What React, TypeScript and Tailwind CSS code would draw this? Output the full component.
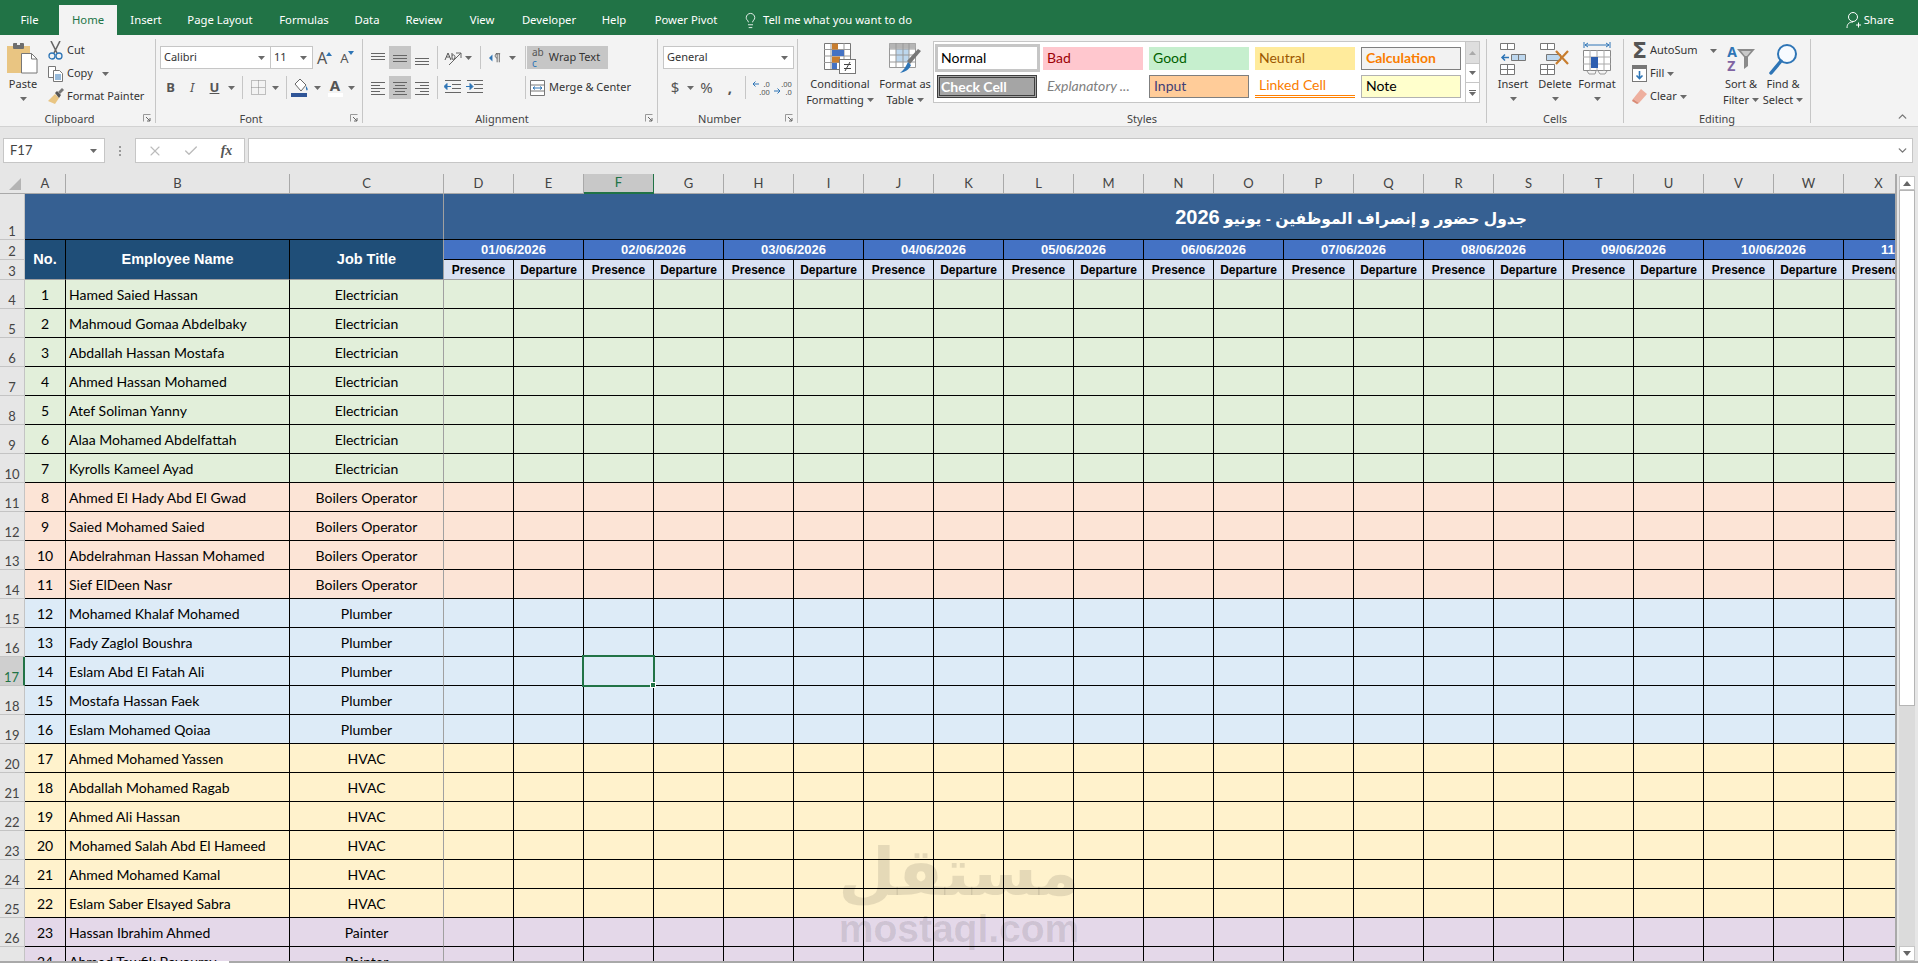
import { ReactNode } from "react";
import { Check, ChevronDown, ChevronUp, Lightbulb, X } from "lucide-react";

const tabs = [
  { label: "File", w: "w-[59px]" },
  { label: "Home", w: "w-[58px]", active: true },
  { label: "Insert", w: "w-[58px]" },
  { label: "Page Layout", w: "w-[90px]" },
  { label: "Formulas", w: "w-[78px]" },
  { label: "Data", w: "w-[48px]" },
  { label: "Review", w: "w-[66px]" },
  { label: "View", w: "w-[50px]" },
  { label: "Developer", w: "w-[84px]" },
  { label: "Help", w: "w-[46px]" },
  { label: "Power Pivot", w: "w-[98px]" },
];

const columns = "D E F G H I J K L M N O P Q R S T U V W X".split(" ");

const dates = ["01", "02", "03", "04", "05", "06", "07", "08", "09", "10", "11"].map((d) => `${d}/06/2026`);

const green = "bg-[#e2efda]";
const orange = "bg-[#fce4d6]";
const blue = "bg-[#ddebf7]";
const yellow = "bg-[#fff2cc]";
const purple = "bg-[#e4d8e9]";

const staff: [string, string, string][] = [
  ["Hamed Saied Hassan", "Electrician", green],
  ["Mahmoud Gomaa Abdelbaky", "Electrician", green],
  ["Abdallah Hassan Mostafa", "Electrician", green],
  ["Ahmed Hassan Mohamed", "Electrician", green],
  ["Atef Soliman Yanny", "Electrician", green],
  ["Alaa Mohamed Abdelfattah", "Electrician", green],
  ["Kyrolls Kameel Ayad", "Electrician", green],
  ["Ahmed El Hady Abd El Gwad", "Boilers Operator", orange],
  ["Saied Mohamed Saied", "Boilers Operator", orange],
  ["Abdelrahman Hassan Mohamed", "Boilers Operator", orange],
  ["Sief ElDeen Nasr", "Boilers Operator", orange],
  ["Mohamed Khalaf Mohamed", "Plumber", blue],
  ["Fady Zaglol Boushra", "Plumber", blue],
  ["Eslam Abd El Fatah Ali", "Plumber", blue],
  ["Mostafa Hassan Faek", "Plumber", blue],
  ["Eslam Mohamed Qoiaa", "Plumber", blue],
  ["Ahmed Mohamed Yassen", "HVAC", yellow],
  ["Abdallah Mohamed Ragab", "HVAC", yellow],
  ["Ahmed Ali Hassan", "HVAC", yellow],
  ["Mohamed Salah Abd El Hameed", "HVAC", yellow],
  ["Ahmed Mohamed Kamal", "HVAC", yellow],
  ["Eslam Saber Elsayed Sabra", "HVAC", yellow],
  ["Hassan Ibrahim Ahmed", "Painter", purple],
  ["Ahmed Tawfik Bayoumy", "Painter", purple],
];

function Caret() {
  return (
    <svg width="7" height="4" viewBox="0 0 7 4" className="shrink-0">
      <path d="M0 0h7L3.5 4z" fill="#6a6a6a" />
    </svg>
  );
}

function Slot({ className, children }: { className: string; children?: ReactNode }) {
  return <div className={`flex h-[23px] shrink-0 items-center justify-center ${className}`}>{children}</div>;
}

function Sep({ className }: { className: string }) {
  return (
    <div className={`flex h-[23px] shrink-0 justify-center ${className}`}>
      <div className="h-full w-px bg-[#c6c6c6]" />
    </div>
  );
}

function Launcher() {
  return (
    <svg width="8" height="8" viewBox="0 0 8 8" className="absolute bottom-[1px] right-[4px]">
      <path d="M0.5 7.5V0.5H7.5" fill="none" stroke="#999" />
      <path d="M3 3l4 4M7 4v3H4" fill="none" stroke="#666" />
    </svg>
  );
}

function Group({ label, className, launcher, children }: { label: string; className: string; launcher?: boolean; children: ReactNode }) {
  return (
    <div className={`relative flex h-[84px] shrink-0 flex-col border-r border-[#c6c6c6] ${className}`}>
      <div className="flex h-[75px]">{children}</div>
      <div className={launcher ? "h-[9px] pr-[16px] text-center text-[11px] leading-[9px] text-[#444]" : "h-[9px] text-center text-[11px] leading-[9px] text-[#444]"}>{label}</div>
      {launcher && <Launcher />}
    </div>
  );
}

function BigBtn({ className, icon, lines, caret }: { className: string; icon: ReactNode; lines: ReactNode[]; caret?: boolean }) {
  return (
    <div className={`flex shrink-0 flex-col items-center pt-[4px] ${className}`}>
      <div className="flex h-[31px] items-center justify-center">{icon}</div>
      <div className="mt-[2px] flex flex-col items-center text-[11px] leading-[16px] text-[#333]">
        {lines.map((line, i) => (
          <div key={i} className="flex h-[16px] items-center gap-[3px] whitespace-nowrap">
            {line}
          </div>
        ))}
      </div>
      {caret && (
        <div className="flex h-[14px] items-center">
          <Caret />
        </div>
      )}
    </div>
  );
}

function Bars({ rows }: { rows: [number, number, number][] }) {
  return (
    <svg width="16" height="16" viewBox="0 0 16 16">
      {rows.map(([x, y, w], i) => (
        <rect key={i} x={x} y={y} width={w} height="1" fill="#666" />
      ))}
    </svg>
  );
}

function PasteIcon() {
  return (
    <svg width="32" height="31" viewBox="0 0 32 31">
      <rect x="0" y="3" width="23" height="27" fill="#e9c582" />
      <rect x="6" y="0" width="11" height="6" rx="1" fill="#6e6e6e" />
      <rect x="10" y="0" width="3" height="2" fill="#eee" />
      <path d="M14.5 10.5h10l5.5 5.5v14H14.5z" fill="#fff" stroke="#777" />
      <path d="M24.5 10.5V16H30" fill="none" stroke="#777" />
    </svg>
  );
}

function ScissorsIcon() {
  return (
    <svg width="15" height="19" viewBox="0 0 15 19">
      <path d="M3 0l6 12M12 0L6 12" stroke="#666" strokeWidth="1.6" fill="none" />
      <circle cx="4" cy="15" r="3" fill="none" stroke="#2e75b6" strokeWidth="1.3" />
      <circle cx="11" cy="15" r="3" fill="none" stroke="#2e75b6" strokeWidth="1.3" />
    </svg>
  );
}

function CopyIcon() {
  return (
    <svg width="15" height="16" viewBox="0 0 15 16">
      <path d="M0.5 0.5h7v11h-7z" fill="#fff" stroke="#777" />
      <path d="M5.5 4.5h6l3 3v8h-9z" fill="#fff" stroke="#777" />
      <path d="M7 9h6M7 11h6M7 13h6" stroke="#2e75b6" />
    </svg>
  );
}

function BrushIcon() {
  return (
    <svg width="16" height="17" viewBox="0 0 16 17">
      <path d="M7 6l4 4-4 6-7-3z" fill="#e9c582" />
      <path d="M7 5l2-2 4 4-2 3z" fill="#555" />
      <path d="M10 4l4-4 2 2-4 4z" fill="#777" />
    </svg>
  );
}

function GrowA({ small }: { small?: boolean }) {
  return (
    <div className="relative flex items-end">
      <span className={small ? "text-[13px] leading-none text-[#555]" : "text-[16px] leading-none text-[#555]"}>A</span>
      <svg width="6" height="4" viewBox="0 0 6 4" className="mb-[10px] -ml-[1px]">
        <path d={small ? "M0 0h6L3 4z" : "M0 4h6L3 0z"} fill="#2e75b6" />
      </svg>
    </div>
  );
}

function BordersIcon() {
  return (
    <svg width="15" height="15" viewBox="0 0 15 15">
      <path d="M0.5 0.5h14v14H0.5zM7.5 0.5v14M0.5 7.5h14" fill="none" stroke="#888" strokeDasharray="1 1" />
    </svg>
  );
}

function FillIcon() {
  return (
    <svg width="18" height="19" viewBox="0 0 18 19">
      <path d="M4 6l5-5 6 6-5 6z" fill="#fff" stroke="#666" />
      <path d="M15 8c1.5 2 2 3 1.5 4s-2 .5-1.5-4z" fill="#2e75b6" />
      <rect x="0" y="15" width="16" height="4" fill="#2f5597" />
    </svg>
  );
}

function OrientIcon() {
  return (
    <svg width="20" height="16" viewBox="0 0 20 16">
      <path d="M6 15L18 3" stroke="#666" fill="none" />
      <path d="M13 3h5v5" stroke="#666" fill="none" />
      <path d="M2 10l3-7 3 7M3.500 7h3M9 3v6c2 1 3-.5 3-2s-1.500-3-3-1.500" stroke="#555" fill="none" />
    </svg>
  );
}

function RtlIcon() {
  return (
    <svg width="14" height="12" viewBox="0 0 14 12">
      <path d="M0 6l4-4v8z" fill="#2e75b6" />
      <path d="M8 1h5M9.5 1v10M12 1v10M9.5 1C6.5 1 6.5 6 9.5 6" stroke="#555" fill="none" />
    </svg>
  );
}

function IndentIcon({ flip }: { flip?: boolean }) {
  return (
    <svg width="17" height="15" viewBox="0 0 17 15">
      <path d="M1 0.5h16M8 4.5h9M8 8.5h9M1 12.5h16" stroke="#666" />
      <path d={flip ? "M0 6.5h4M4 3.5l3 3-3 3z" : "M7 6.5H3M3 3.5l-3 3 3 3z"} stroke="#2e75b6" fill="#2e75b6" />
    </svg>
  );
}

function MergeIcon() {
  return (
    <svg width="15" height="16" viewBox="0 0 15 16">
      <path d="M0.5 0.5h14v15H0.5zM0.5 5h14M0.5 11h14" fill="#fff" stroke="#777" />
      <path d="M3 8h9M3 8l2-1.5M3 8l2 1.5M12 8l-2-1.5M12 8l-2 1.5" stroke="#2e75b6" fill="none" />
    </svg>
  );
}

function DecIcon({ more }: { more?: boolean }) {
  return (
    <div className="flex items-center text-[7.5px] leading-[8px] text-[#555]">
      {!more && (
        <svg width="7" height="8" viewBox="0 0 7 8" className="-mt-[7px]">
          <path d="M7 4H1M3.500 1.500L1 4l2.500 2.500" stroke="#2e75b6" fill="none" />
        </svg>
      )}
      {more && (
        <svg width="7" height="8" viewBox="0 0 7 8" className="mt-[7px]">
          <path d="M0 4h6M3.500 1.500L6 4 3.500 6.500" stroke="#2e75b6" fill="none" />
        </svg>
      )}
      <div className="flex flex-col items-end">
        <span>{more ? ".00" : ".0"}</span>
        <span>{more ? ".0" : ".00"}</span>
      </div>
    </div>
  );
}

function CondIcon() {
  return (
    <svg width="32" height="31" viewBox="0 0 32 31">
      <path d="M0.5 0.5h26v26H0.5z" fill="#fff" stroke="#777" />
      <path d="M7 0v26M20 0v26M0 6.5h26M0 13h26M0 19.5h26" stroke="#999" fill="none" />
      <rect x="8" y="0.5" width="6" height="6" fill="#c87d2e" />
      <rect x="8" y="7" width="12" height="6" fill="#4472c4" />
      <rect x="8" y="13.5" width="8" height="6" fill="#c87d2e" />
      <rect x="8" y="20" width="5" height="6" fill="#4472c4" />
      <rect x="15.5" y="16.5" width="16" height="14" fill="#fff" stroke="#777" />
      <path d="M20 21.5h7M20 25.5h7M26 19l-5 9" stroke="#444" fill="none" />
    </svg>
  );
}

function TableIcon() {
  return (
    <svg width="32" height="31" viewBox="0 0 32 31">
      <path d="M0.5 0.5h26v24H0.5z" fill="#fff" stroke="#999" />
      <rect x="0.5" y="0.5" width="26" height="5" fill="#b5b5b5" />
      <rect x="7" y="6" width="13" height="13" fill="#bdd7ee" />
      <path d="M7 0v25M14 0v25M20 0v25M0 6h26M0 12h26M0 19h26" stroke="#999" fill="none" />
      <path d="M18 18L29 6l3 2-11 13z" fill="#777" />
      <path d="M19 19l3 3c-2 5-6 7-11 8 4-3 6-7 8-11z" fill="#2e75b6" />
    </svg>
  );
}

function InsertIcon() {
  return (
    <svg width="27" height="32" viewBox="0 0 27 32">
      <path d="M0.5 0.5h14v6H0.5zM7.5 0.5v6" fill="#fff" stroke="#777" />
      <path d="M11.5 11.5h14v6H11.5zM18.5 11.5v6" fill="#bdd7ee" stroke="#777" />
      <path d="M9 14.5H2M5 11.5l-3 3 3 3" stroke="#2e75b6" strokeWidth="1.5" fill="none" />
      <path d="M0.5 21.5h14v10H0.5zM7.5 21.5v10M0.5 26.5h14" fill="#fff" stroke="#777" />
    </svg>
  );
}

function DeleteIcon() {
  return (
    <svg width="30" height="32" viewBox="0 0 30 32">
      <path d="M0.5 0.5h14v6H0.5zM7.5 0.5v6" fill="#fff" stroke="#777" />
      <path d="M6.5 11.5h14v6H6.5z" fill="#bdd7ee" stroke="#777" />
      <path d="M0.5 21.5h14v10H0.5zM7.5 21.5v10M0.5 26.5h14" fill="#fff" stroke="#777" />
      <path d="M16 8l12 13M28 8L16 21" stroke="#c87d2e" strokeWidth="2.2" />
    </svg>
  );
}

function FormatIcon() {
  return (
    <svg width="28" height="33" viewBox="0 0 28 33">
      <path d="M2 3h24M2 3l3-2M2 3l3 2M26 3l-3-2M26 3l-3 2M1 0v6M27 0v6" stroke="#2e75b6" fill="none" />
      <path d="M0.5 8.5h27v20H0.5z" fill="#fff" stroke="#888" />
      <path d="M7 8v21M14 8v21M21 8v21M0 15h28M0 22h28" stroke="#aaa" />
      <rect x="8" y="15" width="7" height="11" fill="#2f5fb0" />
      <path d="M4 29l2 3h6l1-3M15 29l2 3h5l2-3" stroke="#999" fill="none" />
    </svg>
  );
}

function FillDownIcon() {
  return (
    <svg width="15" height="17" viewBox="0 0 15 17">
      <rect x="0.5" y="0.5" width="14" height="16" fill="#fff" stroke="#777" />
      <rect x="0" y="0" width="15" height="4" fill="#777" />
      <path d="M7.5 6v7M4.5 10.5l3 3 3-3" stroke="#2e75b6" strokeWidth="1.6" fill="none" />
    </svg>
  );
}

function EraserIcon() {
  return (
    <svg width="15" height="15" viewBox="0 0 15 15">
      <path d="M9 0l6 5-8 9-6-4z" fill="#eeaf9e" />
      <path d="M1 10l6 4-2 1-5-3z" fill="#d98a75" />
    </svg>
  );
}

function FunnelIcon() {
  return (
    <svg width="18" height="20" viewBox="0 0 18 20">
      <path d="M0 0h18l-7 8v9l-4 3V8z" fill="#8a8a8a" />
      <path d="M4 2h10l-4 5H8z" fill="#c9c9c9" />
    </svg>
  );
}

function FindIcon() {
  return (
    <svg width="29" height="32" viewBox="0 0 29 32">
      <circle cx="18" cy="11" r="9" fill="#f7fbff" stroke="#2e75b6" strokeWidth="2" />
      <path d="M12 18L2 30" stroke="#2e75b6" strokeWidth="3.5" strokeLinecap="round" />
    </svg>
  );
}

function TitleBar() {
  return (
    <div className="flex h-[35px] shrink-0 items-end bg-[#217346] text-[11.3px] text-white">
      {tabs.map((t) => (
        <div
          key={t.label}
          className={
            t.active
              ? `flex h-[30px] items-center justify-center bg-[#f3f3f3] text-[#217346] ${t.w}`
              : `flex h-[30px] items-center justify-center ${t.w}`
          }
        >
          {t.label}
        </div>
      ))}
      <div className="ml-[7px] flex h-[30px] items-center gap-[4px]">
        <Lightbulb size={17} strokeWidth={1.2} />
        <span>Tell me what you want to do</span>
      </div>
      <div className="ml-auto mr-[24px] flex h-[30px] items-center gap-[3px]">
        <svg width="15" height="18" viewBox="0 0 15 18">
          <circle cx="7" cy="6" r="4.5" fill="none" stroke="#fff" />
          <path d="M1 17c0-4 2-6 6-6M10 14h5M12.5 11.500v5" fill="none" stroke="#fff" />
        </svg>
        <span>Share</span>
      </div>
    </div>
  );
}

function Ribbon() {
  return (
    <div className="flex h-[92px] shrink-0 items-start border-b border-[#d2d2d2] bg-[#f3f3f3] pt-[4px]">
      <Group label="Clipboard" className="w-[156px]" launcher>
        <BigBtn className="w-[46px]" icon={<PasteIcon />} lines={["Paste"]} caret />
        <div className="flex flex-col pl-[2px] text-[11px] text-[#333]">
          <div className="flex h-[23px] items-center gap-[4px]">
            <ScissorsIcon />
            <span>Cut</span>
          </div>
          <div className="flex h-[23px] items-center gap-[4px]">
            <CopyIcon />
            <span>Copy</span>
            <span className="ml-[5px]">
              <Caret />
            </span>
          </div>
          <div className="flex h-[23px] items-center gap-[3px]">
            <BrushIcon />
            <span>Format Painter</span>
          </div>
        </div>
      </Group>

      <Group label="Font" className="w-[207px]" launcher>
        <div className="flex flex-col pl-[4px] pt-[7px]">
          <div className="flex h-[23px] text-[11px] text-[#333]">
            <div className="flex w-[111px] items-center justify-between border border-[#c6c6c6] bg-white pl-[3px] pr-[5px]">
              Calibri
              <Caret />
            </div>
            <div className="flex w-[42px] items-center justify-between border border-l-0 border-[#c6c6c6] bg-white pl-[3px] pr-[5px]">
              11
              <Caret />
            </div>
            <Slot className="w-[23px]">
              <GrowA />
            </Slot>
            <Slot className="w-[22px]">
              <GrowA small />
            </Slot>
          </div>
          <div className="mt-[7px] flex h-[23px] text-[13px] text-[#555]">
            <Slot className="w-[21px] font-bold">B</Slot>
            <Slot className="w-[22px] italic">I</Slot>
            <Slot className="w-[23px] font-bold underline">U</Slot>
            <Slot className="w-[10px]">
              <Caret />
            </Slot>
            <Sep className="w-[12px]" />
            <Slot className="w-[20px]">
              <BordersIcon />
            </Slot>
            <Slot className="w-[14px]">
              <Caret />
            </Slot>
            <Sep className="w-[8px]" />
            <Slot className="w-[20px]">
              <FillIcon />
            </Slot>
            <Slot className="w-[14px]">
              <Caret />
            </Slot>
            <Slot className="w-[22px] flex-col text-[15px] font-bold leading-[15px]">
              A<div className="h-[4px] w-[15px] bg-white" />
            </Slot>
            <Slot className="w-[10px]">
              <Caret />
            </Slot>
          </div>
        </div>
      </Group>

      <Group label="Alignment" className="w-[295px]" launcher>
        <div className="flex flex-col pl-[4px] pt-[7px] text-[11px] text-[#333]">
          <div className="flex h-[23px]">
            <Slot className="w-[22px]">
              <Bars rows={[[1, 3, 14], [1, 6, 14], [1, 9, 14]]} />
            </Slot>
            <Slot className="w-[22px] bg-[#c6c6c6]">
              <Bars rows={[[1, 5, 14], [1, 8, 14], [1, 11, 14]]} />
            </Slot>
            <Slot className="w-[22px]">
              <Bars rows={[[1, 8, 14], [1, 11, 14], [1, 14, 14]]} />
            </Slot>
            <Sep className="w-[8px]" />
            <Slot className="w-[24px]">
              <OrientIcon />
            </Slot>
            <Slot className="w-[6px]">
              <Caret />
            </Slot>
            <Sep className="w-[18px]" />
            <Slot className="w-[12px]">
              <RtlIcon />
            </Slot>
            <Slot className="w-[22px]">
              <Caret />
            </Slot>
            <Sep className="w-[4px]" />
            <div className="flex h-[23px] w-[81px] items-center gap-[5px] bg-[#c6c6c6] pl-[5px]">
              <div className="flex flex-col text-[10px] leading-[11px] text-[#555]">
                <span>ab</span>
                <span className="text-[#2e75b6]">c</span>
              </div>
              <span>Wrap Text</span>
            </div>
          </div>
          <div className="mt-[7px] flex h-[23px]">
            <Slot className="w-[22px]">
              <Bars rows={[[1, 2, 14], [1, 5, 9], [1, 8, 14], [1, 11, 9], [1, 14, 14]]} />
            </Slot>
            <Slot className="w-[22px] bg-[#c6c6c6]">
              <Bars rows={[[1, 2, 14], [3, 5, 10], [1, 8, 14], [3, 11, 10], [1, 14, 14]]} />
            </Slot>
            <Slot className="w-[22px]">
              <Bars rows={[[1, 2, 14], [6, 5, 9], [1, 8, 14], [6, 11, 9], [1, 14, 14]]} />
            </Slot>
            <Sep className="w-[8px]" />
            <Slot className="w-[22px]">
              <IndentIcon />
            </Slot>
            <Slot className="w-[23px]">
              <IndentIcon flip />
            </Slot>
            <Slot className="w-[37px]" />
            <Sep className="w-[4px]" />
            <div className="flex h-[23px] items-center gap-[4px] pl-[3px]">
              <MergeIcon />
              <span className="whitespace-nowrap">Merge &amp; Center</span>
            </div>
          </div>
        </div>
      </Group>

      <Group label="Number" className="w-[140px]" launcher>
        <div className="flex flex-col pl-[5px] pt-[7px] text-[#555]">
          <div className="flex h-[23px] w-[131px] items-center justify-between border border-[#c6c6c6] bg-white pl-[3px] pr-[5px] text-[11px] text-[#333]">
            General
            <Caret />
          </div>
          <div className="mt-[7px] flex h-[23px] text-[15px]">
            <Slot className="w-[24px]">$</Slot>
            <Slot className="w-[6px]">
              <Caret />
            </Slot>
            <Slot className="w-[27px]">%</Slot>
            <Slot className="w-[20px] font-bold">,</Slot>
            <Sep className="w-[10px]" />
            <Slot className="w-[22px]">
              <DecIcon />
            </Slot>
            <Slot className="w-[22px]">
              <DecIcon more />
            </Slot>
          </div>
        </div>
      </Group>

      <Group label="Styles" className="w-[689px]">
        <BigBtn
          className="w-[84px]"
          icon={<CondIcon />}
          lines={[
            "Conditional",
            <>
              Formatting <Caret />
            </>,
          ]}
        />
        <BigBtn
          className="w-[46px]"
          icon={<TableIcon />}
          lines={[
            "Format as",
            <>
              Table <Caret />
            </>,
          ]}
        />
        <div className="ml-[5px] mt-[2px] flex h-[62px] w-[547px] border border-[#c6c6c6] bg-white font-['Lato',sans-serif] text-[14px] leading-[18px]">
          <div className="grid flex-1 grid-cols-[102px_100px_100px_100px_100px] grid-rows-[28px_23px] gap-x-[6px] gap-y-[3px] pl-[1px] pt-[2px]">
            <div className="-mr-[3px] flex items-center border-[3px] border-[#c6c6c6] bg-white pb-px pl-[3px] text-black">Normal</div>
            <div className="flex h-[23px] items-center self-center bg-[#ffc7ce] pb-px pl-[4px] text-[#9c0006]">Bad</div>
            <div className="flex h-[23px] items-center self-center bg-[#c6efce] pb-px pl-[4px] text-[#006100]">Good</div>
            <div className="flex h-[23px] items-center self-center bg-[#ffeb9c] pb-px pl-[4px] text-[#9c5700]">Neutral</div>
            <div className="flex h-[23px] items-center self-center border border-[#7f7f7f] bg-[#f2f2f2] pb-px pl-[4px] font-bold text-[#fa7d00]">Calculation</div>
            <div className="ml-[2px] flex w-[100px] items-center border-[3px] border-double border-[#3f3f3f] bg-[#a5a5a5] pl-[1px] font-bold text-white">Check Cell</div>
            <div className="flex items-center pb-px pl-[4px] italic text-[#7f7f7f]">Explanatory ...</div>
            <div className="flex items-center border border-[#7f7f7f] bg-[#ffcc99] pb-px pl-[4px] text-[#3f3f76]">Input</div>
            <div className="flex items-center border-b-[3px] border-double border-[#ff8001] pl-[4px] text-[#fa7d00]">Linked Cell</div>
            <div className="flex items-center border border-[#b2b2b2] bg-[#ffffcc] pb-px pl-[4px] text-black">Note</div>
          </div>
          <div className="flex w-[14px] flex-col border-l border-[#c6c6c6]">
            <div className="flex h-[21px] items-center justify-center bg-[#dedede]">
              <svg width="7" height="4" viewBox="0 0 7 4">
                <path d="M0 4h7L3.5 0z" fill="#aaa" />
              </svg>
            </div>
            <div className="flex h-[20px] items-center justify-center border-y border-[#c6c6c6]">
              <Caret />
            </div>
            <div className="flex flex-1 flex-col items-center justify-center gap-[1px]">
              <div className="h-px w-[7px] bg-[#666]" />
              <Caret />
            </div>
          </div>
        </div>
      </Group>

      <Group label="Cells" className="w-[137px]">
        <div className="flex pl-[5px]">
          <BigBtn className="w-[42px]" icon={<InsertIcon />} lines={["Insert"]} caret />
          <BigBtn className="w-[42px]" icon={<DeleteIcon />} lines={["Delete"]} caret />
          <BigBtn className="w-[42px]" icon={<FormatIcon />} lines={["Format"]} caret />
        </div>
      </Group>

      <Group label="Editing" className="w-[187px]">
        <div className="flex w-[96px] flex-col pl-[8px] text-[11px] text-[#333]">
          <div className="flex h-[23px] items-center gap-[3px]">
            <span className="w-[15px] font-['DejaVu_Sans',sans-serif] text-[22px] font-bold leading-none text-[#555]">Σ</span>
            <span>AutoSum</span>
            <span className="ml-[9px]">
              <Caret />
            </span>
          </div>
          <div className="flex h-[23px] items-center gap-[3px]">
            <FillDownIcon />
            <span>Fill</span>
            <Caret />
          </div>
          <div className="flex h-[23px] items-center gap-[3px]">
            <EraserIcon />
            <span>Clear</span>
            <Caret />
          </div>
        </div>
        <BigBtn
          className="w-[42px]"
          icon={
            <div className="flex items-center">
              <div className="flex flex-col text-[14px] font-bold leading-[14px]">
                <span className="text-[#2e75b6]">A</span>
                <span className="text-[#8064a2]">Z</span>
              </div>
              <FunnelIcon />
            </div>
          }
          lines={[
            "Sort &",
            <>
              Filter <Caret />
            </>,
          ]}
        />
        <BigBtn
          className="w-[42px]"
          icon={<FindIcon />}
          lines={[
            "Find &",
            <>
              Select <Caret />
            </>,
          ]}
        />
      </Group>

      <div className="flex h-[84px] flex-1 items-end justify-end pr-[9px]">
        <ChevronUp size={13} strokeWidth={2.5} className="text-[#777]" />
      </div>
    </div>
  );
}

function FormulaBar() {
  return (
    <div className="flex h-[47px] shrink-0 items-start gap-0 pt-[11px] text-[13px] text-[#444]">
      <div className="ml-[3px] flex h-[25px] w-[102px] items-center justify-between border border-[#c6c6c6] bg-white pl-[6px] pr-[7px] font-['Lato',sans-serif] text-[13px]">
        F17
        <Caret />
      </div>
      <div className="flex h-[25px] w-[30px] flex-col items-center justify-center gap-[2px]">
        <div className="h-[2px] w-[2px] bg-[#999]" />
        <div className="h-[2px] w-[2px] bg-[#999]" />
        <div className="h-[2px] w-[2px] bg-[#999]" />
      </div>
      <div className="flex h-[25px] w-[110px] items-center border border-[#c6c6c6] bg-white">
        <div className="flex w-[37px] justify-center text-[#bbb]">
          <X size={16} strokeWidth={1.6} />
        </div>
        <div className="flex w-[36px] justify-center text-[#bbb]">
          <Check size={16} strokeWidth={2} />
        </div>
        <div className="flex w-[35px] justify-center font-['Liberation_Serif',serif] text-[14px] font-bold italic text-[#555]">fx</div>
      </div>
      <div className="ml-[3px] flex h-[25px] w-[1665px] items-center justify-end border border-[#c6c6c6] bg-white pr-[3px]">
        <ChevronDown size={13} strokeWidth={2.5} className="text-[#777]" />
      </div>
    </div>
  );
}

function Sheet() {
  const rowHeader = "flex items-end justify-center border-b border-r border-[#c4c4c4] bg-[#e6e6e6] text-[13px] text-[#444] leading-[16px]";
  const cell = "border-b border-r border-black";
  const letter = "flex items-center justify-center border-b border-r border-[#a9a9a9] text-[13px] text-[#444]";
  const head = "row-span-2 flex items-center justify-center border-b border-r border-b-[#a0a0a0] bg-[#1f4e78] font-['Liberation_Sans',sans-serif] text-[14.5px] font-bold text-white";
  const sub = "flex items-center justify-center border-b border-r border-b-[#a0a0a0] border-r-black bg-[#d9e1f2] font-['Liberation_Sans',sans-serif] text-[12px] font-bold text-black";
  return (
    <div className="flex h-[787px] shrink-0">
      <div className="relative h-full w-[1897px] overflow-hidden border-r-2 border-[#a9a9a9] font-['Lato',sans-serif] text-[14px]">
        {/* X is the last column in view, its date is merged with the hidden one after it */}
        <div className="grid w-[1914px] grid-cols-[25px_41px_224px_154px_repeat(21,70px)] grid-rows-[20px_46px_20px_20px_repeat(24,29px)]">
          {/* column letters */}
          <div className="flex items-end justify-end border-b border-[#a9a9a9] pb-[3px] pr-[4px]">
            <svg width="12" height="12" viewBox="0 0 12 12">
              <path d="M12 0v12H0z" fill="#b4b4b4" />
            </svg>
          </div>
          {["A", "B", "C"].map((c) => (
            <div key={c} className={letter}>
              {c}
            </div>
          ))}
          {columns.map((c) =>
            c === "F" ? (
              <div key={c} className="flex items-center justify-center border-b-2 border-r border-[#217346] bg-[#c8c8c8] text-[13px] text-[#217346]">
                {c}
              </div>
            ) : (
              <div key={c} className={letter}>
                {c}
              </div>
            ),
          )}

          {/* title row */}
          <div className={rowHeader}>1</div>
          <div className="col-span-3 border-b border-r border-b-black border-r-[#a0a0a0] bg-[#366092]" />
          <div className="col-span-21 flex items-center justify-end border-b border-black bg-[#366092] pr-[387px]">
            <span dir="rtl" className="font-['Liberation_Sans','DejaVu_Sans',sans-serif] text-[15.5px] font-bold text-white">
              جدول حضور و إنصراف الموظفين - يونيو <span className="text-[20px]">2026</span>
            </span>
          </div>

          {/* header rows */}
          <div className={rowHeader}>2</div>
          <div className={`${head} border-r-black`}>No.</div>
          <div className={`${head} border-r-black`}>Employee Name</div>
          <div className={`${head} border-r-[#a0a0a0]`}>Job Title</div>
          {dates.slice(0, 10).map((d) => (
            <div key={d} className="col-span-2 flex items-center justify-center border-b border-r border-black bg-[#4472c4] font-['Liberation_Sans',sans-serif] text-[13px] font-bold text-white">
              {d}
            </div>
          ))}
          <div className="overflow-hidden whitespace-nowrap border-b border-black bg-[#4472c4] pl-[37px] font-['Liberation_Sans',sans-serif] text-[13px] font-bold leading-[19px] text-white">
            {dates[10]}
          </div>
          <div className={rowHeader}>3</div>
          {dates.slice(0, 10).map((d) => [
            <div key={`${d}p`} className={sub}>Presence</div>,
            <div key={`${d}d`} className={sub}>Departure</div>,
          ])}
          <div className={sub}>Presence</div>

          {/* people */}
          {staff.map(([name, job, bg], i) => {
            const row = i + 4;
            return [
              row === 17 ? (
                <div key={`h${row}`} className="flex items-end justify-center border-b border-r-2 border-b-[#c4c4c4] border-r-[#217346] bg-[#cfcfcf] text-[13px] leading-[16px] text-[#217346]">
                  {row}
                </div>
              ) : (
                <div key={`h${row}`} className={rowHeader}>
                  {row}
                </div>
              ),
              <div key={`a${row}`} className={`flex items-center justify-center text-black ${cell} ${bg}`}>
                {i + 1}
              </div>,
              <div key={`b${row}`} className={`flex items-center whitespace-nowrap pl-[3px] text-black ${cell} ${bg}`}>
                {name}
              </div>,
              <div key={`c${row}`} className={`flex items-center justify-center border-b border-r border-b-black border-r-[#a0a0a0] text-black ${bg}`}>
                {job}
              </div>,
              ...columns.map((c) =>
                c === "F" && row === 17 ? (
                  <div key={c + row} className={`relative ${cell} ${bg}`}>
                    <div className="absolute -left-[2px] -top-[2px] z-10 h-[32px] w-[73px] border-2 border-[#217346]" />
                    <div className="absolute -bottom-[3px] -right-[3px] z-10 h-[6px] w-[6px] border border-white bg-[#217346]" />
                  </div>
                ) : (
                  <div key={c + row} className={`${cell} ${bg}`} />
                ),
              ),
            ];
          })}
        </div>

        {/* watermark */}
        <div className="pointer-events-none absolute left-[843px] top-[660px] flex w-[232px] flex-col items-center text-black/10">
          <span dir="rtl" className="font-['DejaVu_Sans',sans-serif] text-[66px] font-bold leading-[78px]">مستقل</span>
          <span className="font-['Liberation_Sans',sans-serif] text-[39px] font-bold leading-[34px]">mostaql.com</span>
        </div>
      </div>

      {/* vertical scrollbar */}
      <div className="ml-[2px] flex h-[787px] w-[16px] flex-col pt-[2px]">
        <div className="flex h-[14px] items-center justify-center border border-[#c6c6c6] bg-white">
          <svg width="8" height="5" viewBox="0 0 8 5">
            <path d="M0 5h8L4 0z" fill="#666" />
          </svg>
        </div>
        <div className="h-[516px] border border-[#b5b5b5] bg-white" />
        <div className="flex-1 bg-[#dbdbdb]" />
        <div className="flex h-[15px] items-center justify-center border border-[#c6c6c6] bg-white">
          <svg width="8" height="5" viewBox="0 0 8 5">
            <path d="M0 0h8L4 5z" fill="#666" />
          </svg>
        </div>
      </div>
    </div>
  );
}

export default function App() {
  return (
    <div className="flex h-[963px] w-[1918px] flex-col overflow-hidden bg-[#e6e6e6] font-['Noto_Sans',sans-serif]">
      <TitleBar />
      <Ribbon />
      <FormulaBar />
      <Sheet />
      <div className="h-[2px] shrink-0 bg-[#a9a9a9]">
        <div className="ml-[98px] h-[2px] w-[131px] bg-white" />
      </div>
    </div>
  );
}
